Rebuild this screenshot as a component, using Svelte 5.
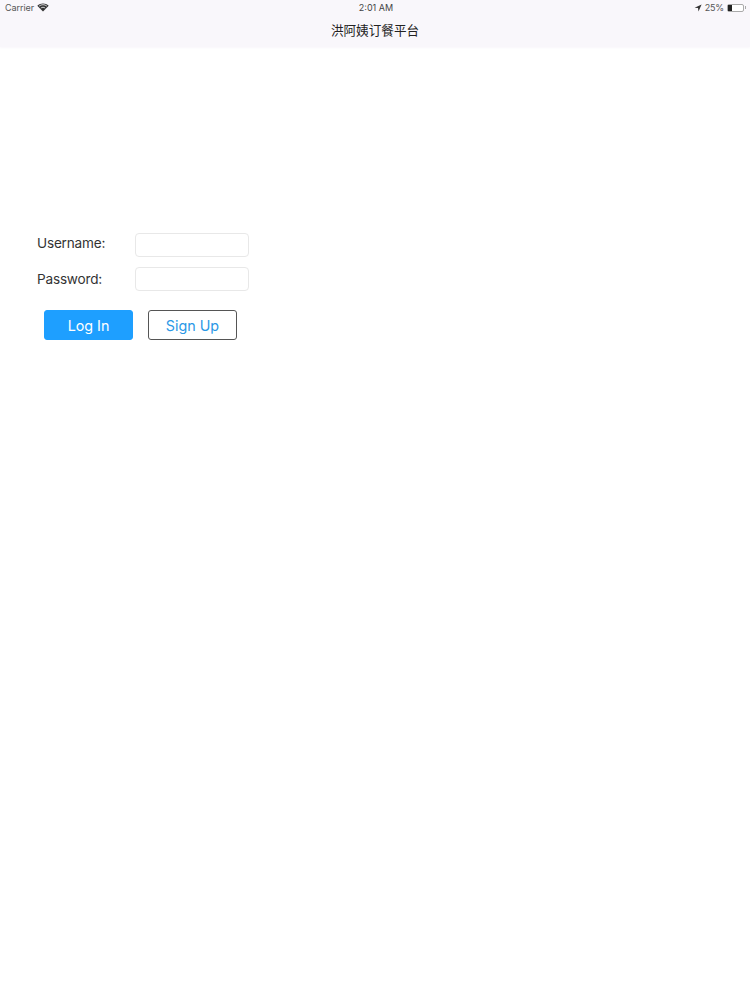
<script>
  let username = $state('');
  let password = $state('');
</script>

<div class="page">
  <header class="bar">
    <div class="status">
      <div class="side">
        <span class="carrier">Carrier</span>
        <svg class="wifi" width="12" height="9" viewBox="0 0 12 9"><path d="M6 8.6 0.3 2.8C3.6-.4 8.4-.4 11.7 2.8Z" fill="#333"/><path d="M2.1 3.1C4.4 1.2 7.6 1.2 9.9 3.1" fill="none" stroke="#f8f6fa" stroke-width=".8"/><path d="M3.8 5.1C5.1 4 6.9 4 8.2 5.1" fill="none" stroke="#f8f6fa" stroke-width=".8"/></svg>
      </div>
      <span class="clock">2:01 AM</span>
      <div class="side right">
        <svg width="8" height="8" viewBox="0 0 8 8"><path d="M7.6.4 .6 3.7l3.4.4.5 3.5Z" fill="#333"/></svg>
        <span class="pct">25%</span>
        <div class="battery"><div class="level"></div></div>
        <div class="nub"></div>
      </div>
    </div>
    <h1>洪阿姨订餐平台</h1>
  </header>

  <form class="login" onsubmit={(e) => e.preventDefault()}>
    <div class="fields">
      <div class="labels">
        <label for="user">Username:</label>
        <label for="pass">Password:</label>
      </div>
      <div class="inputs">
        <input id="user" bind:value={username} />
        <input id="pass" type="password" bind:value={password} />
      </div>
    </div>
    <div class="actions">
      <button type="submit" class="primary">Log In</button>
      <button type="button" class="secondary">Sign Up</button>
    </div>
  </form>
</div>

<style>
  :global(body) { margin: 0; background: #fff; }
  .page {
    width: 750px;
    height: 1000px;
    overflow: hidden;
    background: #fff;
    font-family: "Inter", "Liberation Sans", "Noto Sans CJK SC", sans-serif;
    color: #333;
  }
  .bar {
    height: 47px;
    background: #f9f7fb;
    box-shadow: 0 1px 2px #f9f7fb;
    display: flex;
    flex-direction: column;
  }
  .status {
    height: 15px;
    display: grid;
    grid-template-columns: 1fr auto 1fr;
    align-items: center;
    padding: 0 4px 0 5px;
    font-size: 9px;
    color: #555;
  }
  .side { display: flex; align-items: center; gap: 4px; }
  .carrier { letter-spacing: -0.05px; }
  .wifi { margin-left: -1px; }
  .right { justify-content: flex-end; gap: 3px; }
  .clock { color: #444; margin-left: 1px; }
  .pct { letter-spacing: -0.2px; }
  .battery {
    width: 15px;
    height: 6px;
    border: 1px solid #aaa;
    border-radius: 2px;
    background: #fff;
    display: flex;
  }
  .level { width: 4px; background: #222; }
  .nub { width: 1px; height: 3px; background: #aaa; margin-left: -2px; }
  h1 {
    margin: 0;
    padding-top: 1px;
    text-align: center;
    font-family: "Noto Sans CJK SC", sans-serif;
    font-size: 12.6px;
    line-height: 27px;
    font-weight: 400;
    color: #222;
  }
  .login {
    padding: 178px 0 0 37px;
    display: flex;
    flex-direction: column;
  }
  .fields { display: flex; }
  .labels {
    width: 98px;
    display: flex;
    flex-direction: column;
    font-size: 13.6px;
    letter-spacing: -0.2px;
    color: #333;
  }
  .labels label { line-height: 36px; }
  .inputs {
    padding-top: 8px;
    display: flex;
    flex-direction: column;
    gap: 10px;
  }
  input {
    width: 114px;
    height: 24px;
    box-sizing: border-box;
    border: 1px solid #e8e8e8;
    border-radius: 4px;
    background: #fff;
    outline: none;
    padding: 0 4px;
  }
  .actions {
    display: flex;
    gap: 15px;
    margin: 13px 0 0 7px;
  }
  button {
    width: 89px;
    height: 30px;
    box-sizing: border-box;
    border-radius: 3px;
    font: inherit;
    font-size: 14.3px;
  }
  .primary { background: #1e9fff; border: 1px solid #1e9fff; color: #fff; }
  .secondary { background: #fff; border: 1px solid #555; color: #2b98e6; }
</style>
